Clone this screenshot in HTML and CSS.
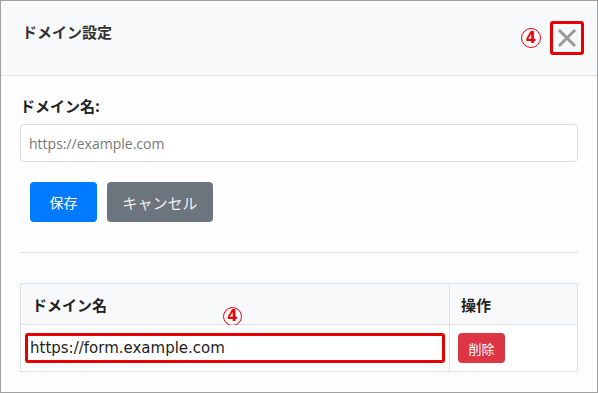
FILE: index.html
```html
<!DOCTYPE html>
<html lang="ja">
<head>
    <meta charset="UTF-8">
    <title>ドメイン設定</title>
    <link rel="stylesheet" href="styles.css">
</head>
<body>
    <div class="modal">
        <div class="modal-header">
            <h2 class="modal-title">ドメイン設定</h2>
            <div class="header-tools">
                <span class="mark">4</span>
                <button class="close-btn">
                    <svg width="20" height="20" viewBox="0 0 20 20"><path d="M3 3 L17 17 M17 3 L3 17" stroke="#999" stroke-width="3" stroke-linecap="square"/></svg>
                </button>
            </div>
        </div>

        <div class="modal-body">
            <label class="field-label">ドメイン名:</label>
            <input class="field-input" type="text" placeholder="https://example.com">

            <div class="btn-row">
                <button class="btn btn-save">保存</button>
                <button class="btn btn-cancel">キャンセル</button>
            </div>

            <hr class="divider">

            <table class="domain-table">
                <thead>
                    <tr>
                        <th class="col-name">ドメイン名<span class="mark mark-table">4</span></th>
                        <th>操作</th>
                    </tr>
                </thead>
                <tbody>
                    <tr>
                        <td class="domain-cell"><span class="hl-box">https://form.example.com</span></td>
                        <td><button class="btn-delete">削除</button></td>
                    </tr>
                </tbody>
            </table>
        </div>
    </div>
</body>
</html>
```

FILE: styles.css
```css
body {
    margin: 0;
    background: #ffffff;
    font-family: "Noto Sans CJK JP", sans-serif;
    color: #212529;
}
.modal {
    width: 598px;
    height: 393px;
    box-sizing: border-box;
    border: 1px solid #a0a0a0;
    background: #fdfdfd;
}
.modal-header {
    height: 74px;
    background: #f8f9fa;
    border-bottom: 1px solid #dee2e6;
    display: flex;
    justify-content: space-between;
    padding: 0 13px 0 21px;
}
.modal-title {
    margin: 21px 0 0;
    font-size: 15px;
    line-height: 20px;
    font-weight: bold;
    color: #333;
}
.header-tools {
    display: flex;
    align-items: center;
    gap: 9px;
    margin-top: 19px;
    height: 35px;
}
.mark {
    width: 20px;
    height: 20px;
    box-sizing: border-box;
    border: 1px solid #e60012;
    border-radius: 50%;
    color: #e60012;
    font-family: "DejaVu Sans", sans-serif;
    font-size: 15px;
    font-weight: bold;
    line-height: 18px;
    text-align: center;
}
.close-btn {
    width: 34px;
    height: 34px;
    box-sizing: border-box;
    border: 3px solid #e60000;
    border-radius: 3px;
    background: transparent;
    padding: 0;
    display: flex;
    align-items: center;
    justify-content: center;
}
.modal-body {
    padding: 0 19px;
}
.field-label {
    display: block;
    margin-top: 20px;
    font-size: 15px;
    line-height: 20px;
    font-weight: bold;
    color: #222;
}
.field-input {
    display: block;
    margin-top: 8px;
    width: 100%;
    height: 38px;
    box-sizing: border-box;
    border: 1px solid #dcdcdc;
    border-radius: 4px;
    padding: 0 8px;
    font-family: "Open Sans", sans-serif;
    font-size: 14px;
    background: #fff;
}
.field-input::placeholder {
    color: #777;
}
.btn-row {
    display: flex;
    gap: 10px;
    margin: 20px 10px 0;
}
.btn {
    height: 40px;
    border: none;
    border-radius: 4px;
    color: #fff;
    font-family: "Noto Sans CJK JP", sans-serif;
    font-size: 14px;
}
.btn-save {
    width: 67px;
    background: #007bff;
}
.btn-cancel {
    width: 106px;
    background: #6c757d;
    font-size: 15px;
    color: #f0f0f0;
}
.divider {
    margin: 30px 0 0;
    border: none;
    border-top: 1px solid #e0e0e0;
}
.domain-table {
    margin-top: 30px;
    width: 100%;
    border-collapse: collapse;
    font-size: 15px;
}
.domain-table th,
.domain-table td {
    border: 1px solid #dee2e6;
    text-align: left;
}
.domain-table th {
    height: 40px;
    padding: 0 11px;
    background: #f8f9fa;
    font-weight: bold;
    color: #222;
}
.domain-table td {
    height: 46px;
    padding: 0 8px;
    background: #fff;
}
.col-name {
    position: relative;
    width: 406px;
}
.mark-table {
    position: absolute;
    left: 202px;
    top: 23px;
    width: 19px;
    height: 19px;
    line-height: 17px;
}
.domain-cell {
    position: relative;
}
.hl-box {
    position: absolute;
    left: 4px;
    top: 8px;
    width: 420px;
    height: 30px;
    box-sizing: border-box;
    border: 3px solid #e60000;
    border-radius: 3px;
    padding-left: 2px;
    font-family: "DejaVu Sans", sans-serif;
    font-size: 15px;
    line-height: 24px;
    color: #222;
}
.btn-delete {
    height: 30px;
    width: 47px;
    border: none;
    border-radius: 4px;
    background: #dc3545;
    color: #fff;
    font-family: "Noto Sans CJK JP", sans-serif;
    font-size: 13px;
}
```
